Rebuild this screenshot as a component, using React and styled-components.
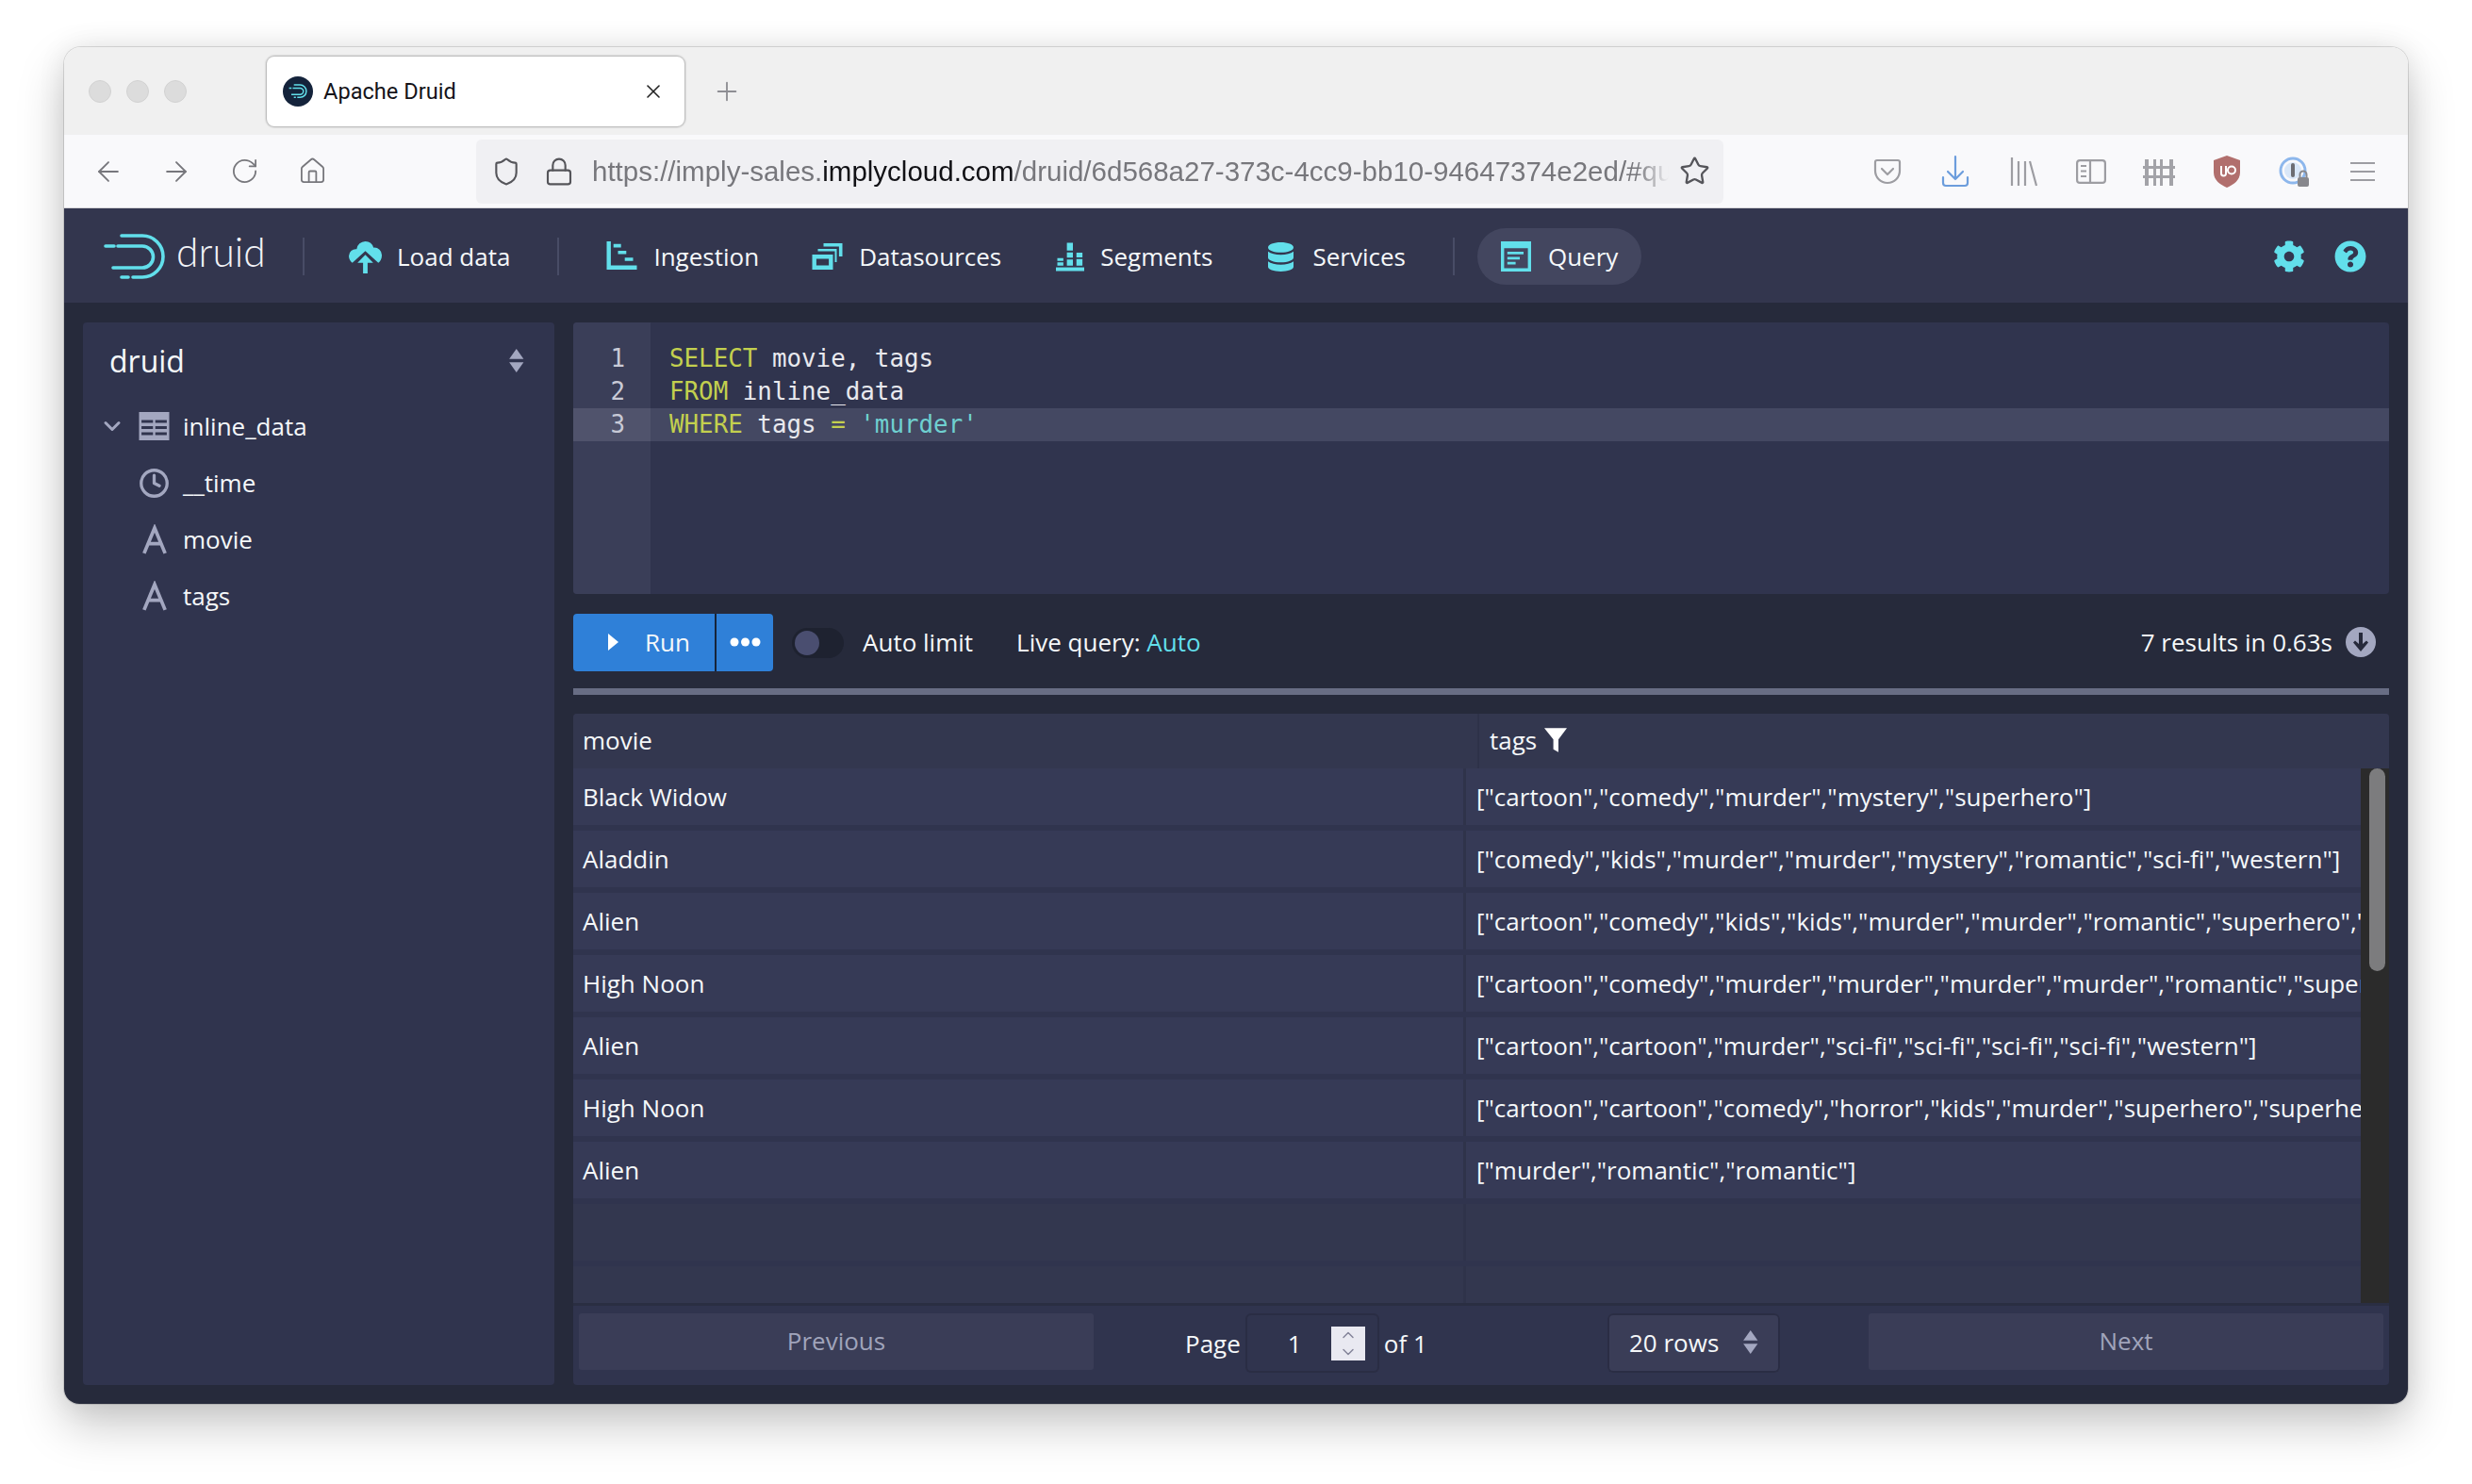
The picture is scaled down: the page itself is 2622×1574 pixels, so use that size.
import React from 'react';
import styled, { createGlobalStyle } from 'styled-components';
import { ArrowLeft, ArrowRight, RotateCw, Home, X, Plus, Shield, Lock, Star, ChevronDown, ChevronUp, Clock } from 'lucide-react';
import { FaCog, FaQuestionCircle } from 'react-icons/fa';

const CYAN = '#62dfeb';
const MUTED = '#a3a7c0';

const Global = createGlobalStyle`
  html, body { margin: 0; padding: 0; background: #fff; }
  * { box-sizing: border-box; }
`;

const Page = styled.div`
  width: 2622px;
  height: 1574px;
  padding: 50px 68px 0;
  background: #fff;
  font-family: "Open Sans", sans-serif;
`;
const Win = styled.div`
  width: 2486px;
  height: 1439px;
  border-radius: 18px 18px 16px 16px;
  overflow: hidden;
  display: flex;
  flex-direction: column;
  box-shadow: 0 0 0 1px rgba(0,0,0,.12), 0 22px 50px rgba(0,0,0,.22), 0 0 30px rgba(0,0,0,.08);
`;

/* ---------- browser chrome ---------- */
const TabStrip = styled.div`
  height: 93px;
  flex: none;
  background: #f0f0f0;
  display: flex;
  align-items: center;
  padding-left: 26px;
`;
const Lights = styled.div`
  display: flex;
  gap: 16px;
  width: 189px;
`;
const Light = styled.span`
  width: 24px;
  height: 24px;
  border-radius: 50%;
  background: #dcdcdc;
  border: 1px solid #d2d2d2;
`;
const Tab = styled.div`
  width: 443px;
  height: 74px;
  background: #fff;
  border-radius: 8px;
  box-shadow: 0 0 2px 1px rgba(0,0,0,.28);
  display: flex;
  align-items: center;
  padding: 0 21px 0 17px;
  gap: 11px;
`;
const TabTitle = styled.span`
  flex: 1;
  font: 400 23.6px "Roboto", "Liberation Sans", sans-serif;
  color: #15141a;
`;
const NewTab = styled.span`
  margin-left: 29px;
  display: flex;
  color: #8e8e93;
`;
const Toolbar = styled.div`
  height: 78px;
  flex: none;
  background: #f9f9fb;
  display: flex;
  align-items: center;
  padding-left: 11px;
  border-bottom: 1px solid #d6d6da;
`;
const ToolBtn = styled.span`
  width: 72px;
  display: flex;
  justify-content: center;
  align-items: center;
  color: ${p => p.$color || '#77777c'};
`;
const UrlBar = styled.div`
  width: 1323px;
  height: 68px;
  margin: 0 138px;
  background: #f0f0f3;
  border-radius: 6px;
  display: flex;
  align-items: center;
  padding: 0 14px 0 16px;
`;
const UrlIcon = styled.span`
  display: flex;
  color: #55555a;
  margin-right: ${p => p.$mr}px;
`;
const UrlText = styled.div`
  flex: 1;
  min-width: 0;
  margin-right: 11px;
  overflow: hidden;
  white-space: nowrap;
  font: 400 29.5px "Liberation Sans", Arial, sans-serif;
  color: #77777c;
  -webkit-mask-image: linear-gradient(to right, #000 97%, transparent 100%);
  mask-image: linear-gradient(to right, #000 97%, transparent 100%);
`;
const Host = styled.span`
  color: #111115;
`;

/* ---------- druid nav ---------- */
const Nav = styled.nav`
  height: 100px;
  flex: none;
  background: #33364e;
  display: flex;
  align-items: center;
  padding: 2px 44px 0 42px;
  color: #f5f8fa;
  font-size: 26px;
`;
const Logo = styled.div`
  display: flex;
  align-items: center;
  gap: 11px;
  width: 211px;
`;
const LogoWord = styled.span`
  font: 300 42.5px "Lato", sans-serif;
  color: #f2f3f7;
  line-height: 1;
  margin-top: -10px;
`;
const Sep = styled.span`
  width: 2px;
  height: 40px;
  background: #484c66;
  margin-left: ${p => p.$ml || 0}px;
`;
const NavItem = styled.a`
  display: flex;
  align-items: center;
  margin-left: ${p => p.$ml}px;
  gap: ${p => p.$gap}px;
`;
const QueryPill = styled.a`
  margin-left: 24px;
  width: 174px;
  height: 60px;
  border-radius: 30px;
  background: #43465f;
  display: flex;
  align-items: center;
  padding-left: 25px;
  gap: 18px;
`;
const NavRight = styled.div`
  margin-left: auto;
  display: flex;
  align-items: center;
  gap: 31px;
  color: ${CYAN};
`;

/* ---------- body ---------- */
const Main = styled.div`
  flex: 1;
  min-height: 0;
  display: flex;
  gap: 20px;
  padding: 21px 20px 20px;
  background: #262a3b;
`;
const Side = styled.aside`
  width: 500px;
  flex: none;
  background: #30344e;
  border-radius: 4px;
  color: #f5f8fa;
  font-size: 26px;
`;
const SideHead = styled.div`
  height: 80px;
  display: flex;
  align-items: center;
  justify-content: space-between;
  padding: 0 32px 0 28px;
  font-size: 32px;
`;
const TreeRow = styled.div`
  height: 60px;
  display: flex;
  align-items: center;
  padding-left: 17px;
`;
const Gutter = styled.span`
  width: 42px;
  display: flex;
  color: ${MUTED};
`;
const TreeIcon = styled.span`
  width: 33px;
  margin-right: 14px;
  display: flex;
  justify-content: center;
  color: ${MUTED};
`;
const Content = styled.div`
  flex: 1;
  min-width: 0;
  display: flex;
  flex-direction: column;
`;
const Editor = styled.div`
  height: 288px;
  flex: none;
  background: #30344e;
  border-radius: 4px;
  overflow: hidden;
  display: flex;
  font: 400 25.85px/35px "DejaVu Sans Mono", monospace;
  color: #e8e9ee;
`;
const LineNos = styled.div`
  width: 82px;
  flex: none;
  background: #3a3e58;
  padding-top: 21px;
`;
const LineNo = styled.div`
  height: 35px;
  text-align: right;
  padding-right: 27px;
  color: #c8cad6;
  background: ${p => (p.$active ? '#50536c' : 'transparent')};
`;
const Code = styled.div`
  flex: 1;
  padding-top: 21px;
`;
const CodeLine = styled.div`
  height: 35px;
  padding-left: 20px;
  white-space: pre;
  background: ${p => (p.$active ? '#444862' : 'transparent')};
`;
const Kw = styled.span`
  color: #c3d04e;
`;
const Str = styled.span`
  color: #6fd0d0;
`;
const Controls = styled.div`
  height: 100px;
  flex: none;
  display: flex;
  align-items: center;
  color: #f5f8fa;
  font-size: 26px;
  padding-top: 2px;
`;
const RunGroup = styled.div`
  display: flex;
  height: 61px;
  border-radius: 4px;
  overflow: hidden;
  background: #16243a;
  gap: 2px;
`;
const RunBtn = styled.div`
  width: 150px;
  background: #2f80d8;
  display: flex;
  align-items: center;
  padding-left: 37px;
  gap: 28px;
`;
const MoreBtn = styled.div`
  width: 60px;
  background: #2f80d8;
  display: flex;
  align-items: center;
  justify-content: center;
`;
const Toggle = styled.div`
  width: 55px;
  height: 32px;
  margin: 2px 0 0 20px;
  border-radius: 16px;
  background: #1e2230;
  padding: 3px;
`;
const Knob = styled.div`
  width: 26px;
  height: 26px;
  border-radius: 50%;
  background: #4a4e70;
`;
const ToggleLabel = styled.span`
  margin-left: 20px;
`;
const LiveLabel = styled.span`
  margin-left: 46px;
`;
const LiveValue = styled.span`
  color: ${CYAN};
`;
const Results = styled.div`
  margin-left: auto;
  display: flex;
  align-items: center;
  gap: 14px;
  padding-right: 14px;
`;
const Splitter = styled.div`
  height: 7px;
  flex: none;
  background: #686d84;
  margin-bottom: 20px;
`;
const TablePanel = styled.section`
  flex: 1;
  min-height: 0;
  background: #30344e;
  border-radius: 4px;
  display: flex;
  flex-direction: column;
  color: #f5f8fa;
  font-size: 26px;
  overflow: hidden;
`;
const HeadRow = styled.div`
  height: 58px;
  flex: none;
  display: flex;
  align-items: center;
  background: #33374f;
`;
const HeadCell = styled.div`
  width: ${p => p.$w}px;
  height: 100%;
  display: flex;
  align-items: center;
  gap: 8px;
  padding-left: ${p => p.$pl}px;
  padding-bottom: 2px;
  border-right: ${p => (p.$line ? '2px solid #2e3249' : 'none')};
`;
const TableBody = styled.div`
  flex: 1;
  min-height: 0;
  display: flex;
  border-bottom: 3px solid #2a2e42;
`;
const Rows = styled.div`
  flex: 1;
  min-width: 0;
  overflow: hidden;
`;
const Row = styled.div`
  height: 60px;
  margin-bottom: 6px;
  display: flex;
  background: ${p => (p.$empty ? '#33374f' : '#363a56')};
`;
const NameCell = styled.div`
  width: 947px;
  flex: none;
  padding-left: 10px;
  line-height: 60px;
  border-right: 3px solid #2f334a;
`;
const TagCell = styled.div`
  flex: 1;
  min-width: 0;
  padding-left: 11px;
  line-height: 60px;
  white-space: nowrap;
  overflow: hidden;
`;
const ScrollTrack = styled.div`
  width: 30px;
  flex: none;
  background: #2b2b2b;
  padding-left: 9px;
`;
const ScrollThumb = styled.div`
  width: 17px;
  height: 215px;
  border-radius: 9px;
  background: #7c7c7e;
`;
const Pager = styled.div`
  height: 84px;
  flex: none;
  display: flex;
  padding: 8px 6px 0 6px;
`;
const PagerBtn = styled.div`
  width: 546px;
  height: 60px;
  flex: none;
  background: #3a3d57;
  border-radius: 3px;
  color: #a0a4bb;
  display: flex;
  align-items: center;
  justify-content: center;
  padding-bottom: 2px;
`;
const PagerMid = styled.div`
  flex: 1;
  display: flex;
  align-items: center;
  height: 63px;
  padding: 0 94px 0 97px;
`;
const NumberBox = styled.div`
  width: 142px;
  height: 63px;
  margin: 0 5px;
  background: #30344e;
  border-radius: 6px;
  box-shadow: inset 0 0 0 2px #2a2d44;
  display: flex;
  align-items: center;
  padding-left: 45px;
`;
const NumberVal = styled.span`
  width: 46px;
`;
const Stepper = styled.span`
  width: 36px;
  height: 36px;
  background: #e9e9f1;
  display: flex;
  flex-direction: column;
  align-items: center;
  justify-content: center;
  color: #85859a;
  line-height: 0;
  svg { margin: -1px 0; }
`;
const SelectBox = styled.div`
  width: 183px;
  height: 63px;
  margin-left: auto;
  background: #3a3d57;
  border-radius: 6px;
  box-shadow: inset 0 0 0 2px #2a2d44;
  display: flex;
  align-items: center;
  justify-content: space-between;
  padding: 0 23px 2px 23px;
`;

/* ---------- drawings ---------- */
const bp = { viewBox: '0 0 16 16', fill: CYAN };
const LogoMark = ({ w = 66, color = CYAN }) => (
  <svg width={w} viewBox="0 0 66 48" fill="none" stroke={color} strokeWidth="3.6" strokeLinecap="round">
    <path d="M19 2H41A22 22 0 0 1 41 46H31" />
    <path d="M19 46H26" />
    <path d="M2 13H11" />
    <path d="M15 13H41A11.5 11.5 0 0 1 41 36H10" />
  </svg>
);
const CloudUp = () => (
  <svg width="35" height="35" {...bp}>
    <path d="M8 .4a4.300 4.300 0 0 1 4 3.100 3.700 3.700 0 0 1 4 3.800c0 1.700-.8 2.800-1.700 3.600L8 5.100 1.700 10.900C.8 10.100 0 9 0 7.500a3.400 3.400 0 0 1 3.800-3.300A4.300 4.300 0 0 1 8 .4z" />
    <path d="M8 7l3.800 3.900H9.100V16H6.900v-5.100H4.200z" />
  </svg>
);
const Gantt = () => (
  <svg width="35" height="32" {...bp}>
    <path d="M0 0h2.200v12.800H16V15H0z" />
    <path d="M3.600 1.400h4v1.800h-4zM6 5h4.400v1.800H6zM9.600 8.600H14v1.800H9.600z" />
  </svg>
);
const Multi = () => (
  <svg width="35" height="32" {...bp}>
    <path fillRule="evenodd" d="M0 7h11v8H0zM2.200 9.200v3.600h6.600V9.200z" />
    <path d="M3 4h10v7h-1V5.200H3z" />
    <path d="M6 1h10v7h-1.800V2.800H6z" />
  </svg>
);
const Stacked = () => (
  <svg width="30" height="33" {...bp}>
    <path d="M0 13.900h16V16H0z" />
    <path d="M.8 8.600h3.400v1.600H.8zM.8 11h3.400v1.900H.8z" />
    <path d="M6.200 0h3.400v4.400H6.200zM6.200 5.400h3.400v3H6.200zM6.200 9.400h3.400v3.500H6.200z" />
    <path d="M11.600 5.600H15v2.600h-3.400zM11.600 9.200H15v3.700h-3.400z" />
  </svg>
);
const Db = () => (
  <svg width="27" height="33" viewBox="1 0 14 16" fill={CYAN}>
    <path d="M8 0C4.100 0 1 1.200 1 2.800s3.100 2.800 7 2.800 7-1.200 7-2.800S11.900 0 8 0z" />
    <path d="M1 5v3.400c0 1.500 3.100 2.600 7 2.600s7-1.100 7-2.600V5c-1.500 1.200-4 1.800-7 1.800S2.500 6.200 1 5z" />
    <path d="M1 10.500v3c0 1.500 3.100 2.500 7 2.500s7-1 7-2.500v-3c-1.500 1.200-4 1.800-7 1.800s-5.500-.6-7-1.800z" />
  </svg>
);
const AppIcon = () => (
  <svg width="32" height="32" {...bp}>
    <path fillRule="evenodd" d="M0 0h16v16H0zM1.700 3.600v10.700h12.600V3.600z" />
    <path d="M3.400 5.500h8.600v1.400H3.400zM3.400 8.200h6.600v1.400H3.400zM3.400 10.900h4.400v1.400H3.400z" />
  </svg>
);
const TableIcon = () => (
  <svg width="33" height="30" viewBox="0 0 16 15" fill={MUTED}>
    <path fillRule="evenodd" d="M0 0h16v15H0zM1.300 4.200v1.500h6.100V4.200zm7.300 0v1.500h6.100V4.200zM1.300 7.500V9h6.100V7.500zm7.300 0V9h6.100V7.500zM1.300 10.800v1.500h6.100v-1.500zm7.300 0v1.500h6.100v-1.500z" />
  </svg>
);
const FontIcon = () => (
  <svg width="26" height="32" viewBox="0 0 14 16" fill="none" stroke={MUTED} strokeWidth="2">
    <path d="M1 16L7 1.500 13 16M3.200 10.500h7.600" />
  </svg>
);
const DoubleCaret = ({ h = 26 }) => (
  <svg width={h * 0.7} height={h} viewBox="0 0 12 18" fill={MUTED}>
    <path d="M6 0l5.500 7.800H.5zM6 18L.5 10.200h11z" />
  </svg>
);
const Play = () => (
  <svg width="11" height="18" viewBox="0 0 11 18" fill="#fff"><path d="M0 0l11 9-11 9z" /></svg>
);
const Dots = () => (
  <svg width="33" height="10" viewBox="0 0 33 10" fill="#fff">
    <circle cx="5" cy="5" r="4.500" /><circle cx="16.500" cy="5" r="4.500" /><circle cx="28" cy="5" r="4.500" />
  </svg>
);
const DownCircle = () => (
  <svg width="32" height="32" viewBox="0 0 16 16">
    <circle cx="8" cy="8" r="8" fill={MUTED} />
    <path d="M7 3h2v6l2-1.800 1 1.100L8 13 4 8.300l1-1.100L7 9z" fill="#262a3b" />
  </svg>
);
const Funnel = () => (
  <svg width="24" height="26" viewBox="0 0 16 17" fill="#fff"><path d="M0 0h16L10 8v9l-3.600-2V8z" /></svg>
);

const Pocket = () => (
  <svg width="30" height="30" viewBox="0 0 30 30" fill="none" stroke="#9d9da2" strokeWidth="2.200" strokeLinejoin="round">
    <path d="M4 3h22a2 2 0 0 1 2 2v9a13 13 0 0 1-26 0V5a2 2 0 0 1 2-2z" />
    <path d="M9 12l6 6 6-6" strokeLinecap="round" />
  </svg>
);
const DownloadTray = () => (
  <svg width="30" height="36" viewBox="0 0 30 36" fill="none" stroke="#6c9ddc" strokeWidth="2.200" strokeLinecap="round" strokeLinejoin="round">
    <path d="M15 2v24M7 18l8 8 8-8" />
    <path d="M2 24v6a3 3 0 0 0 3 3h20a3 3 0 0 0 3-3v-6" />
  </svg>
);
const Library = () => (
  <svg width="30" height="32" viewBox="0 0 30 32" stroke="#9d9da2" strokeWidth="2.200" fill="none">
    <path d="M3 1v30M10 5v26M17 5v26M22 5l7 26" />
  </svg>
);
const SidebarI = () => (
  <svg width="32" height="26" viewBox="0 0 32 26" stroke="#9d9da2" strokeWidth="2.200" fill="none">
    <rect x="1.100" y="1.100" width="29.800" height="23.800" rx="3" />
    <path d="M15 1v24M5 7h6M5 12.500h6M5 18h6" />
  </svg>
);
const Fence = () => (
  <svg width="34" height="30" viewBox="0 0 34 30" fill="#a3a3a8">
    <path d="M2 2h4v28H2zM11 2h3v28h-3zM18 2h3v28h-3zM28 2h4v28h-4z" />
    <path d="M0 9h34v3H0zM0 19h34v3H0z" />
  </svg>
);
const UBlock = () => (
  <svg width="30" height="34" viewBox="0 0 30 34">
    <path d="M15 0l14 5v13c0 8-7 13-14 16C8 31 1 26 1 18V5z" fill="#b16f6d" />
    <path d="M9 11v8a2.500 2.500 0 0 0 5 0v-8" fill="none" stroke="#fff" strokeWidth="2" />
    <circle cx="20" cy="15.500" r="4" fill="none" stroke="#fff" strokeWidth="2" />
  </svg>
);
const OnePass = () => (
  <svg width="34" height="36" viewBox="0 0 34 36" fill="none">
    <circle cx="15" cy="17" r="13" stroke="#8db7ec" strokeWidth="3" />
    <circle cx="15" cy="17" r="9" fill="#d9e7f8" />
    <rect x="13" y="9" width="4" height="15" rx="2" fill="#6d6d72" />
    <rect x="20" y="24" width="12" height="10" rx="2" fill="#88888d" />
    <path d="M22.500 24v-3a3.500 3.500 0 0 1 7 0v3" stroke="#88888d" strokeWidth="2" />
  </svg>
);
const Burger = () => (
  <svg width="28" height="24" viewBox="0 0 28 24" stroke="#9d9da2" strokeWidth="2.200">
    <path d="M1 3h26M1 12h26M1 21h26" />
  </svg>
);

const movies = [
  ['Black Widow', '["cartoon","comedy","murder","mystery","superhero"]'],
  ['Aladdin', '["comedy","kids","murder","murder","mystery","romantic","sci-fi","western"]'],
  ['Alien', '["cartoon","comedy","kids","kids","murder","murder","romantic","superhero","western"]'],
  ['High Noon', '["cartoon","comedy","murder","murder","murder","murder","romantic","superhero","western"]'],
  ['Alien', '["cartoon","cartoon","murder","sci-fi","sci-fi","sci-fi","sci-fi","western"]'],
  ['High Noon', '["cartoon","cartoon","comedy","horror","kids","murder","superhero","superhero","western"]'],
  ['Alien', '["murder","romantic","romantic"]'],
  ['', ''],
  ['', ''],
];

export default function App() {
  return (
    <Page>
      <Global />
      <Win>
        <TabStrip>
          <Lights><Light /><Light /><Light /></Lights>
          <Tab>
            <svg width="32" height="32" viewBox="0 0 32 32">
              <circle cx="16" cy="16" r="16" fill="#14233b" />
              <g transform="translate(6 8.500) scale(.3)"><g fill="none" stroke={CYAN} strokeWidth="5"><path d="M19 2H41A22 22 0 0 1 41 46H31M19 46H26M2 13H11M15 13H41A11.500 11.500 0 0 1 41 36H10" /></g></g>
            </svg>
            <TabTitle>Apache Druid</TabTitle>
            <X size={24} strokeWidth={1.6} color="#222" />
          </Tab>
          <NewTab><Plus size={32} strokeWidth={1.4} /></NewTab>
        </TabStrip>
        <Toolbar>
          <ToolBtn><ArrowLeft size={34} strokeWidth={1.3} /></ToolBtn>
          <ToolBtn><ArrowRight size={34} strokeWidth={1.3} /></ToolBtn>
          <ToolBtn><RotateCw size={31} strokeWidth={1.4} /></ToolBtn>
          <ToolBtn><Home size={31} strokeWidth={1.4} /></ToolBtn>
          <UrlBar>
            <UrlIcon $mr={24}><Shield size={32} strokeWidth={1.6} /></UrlIcon>
            <UrlIcon $mr={19}><Lock size={32} strokeWidth={1.6} /></UrlIcon>
            <UrlText>https://imply-sales.<Host>implycloud.com</Host>/druid/6d568a27-373c-4cc9-bb10-94647374e2ed/#query</UrlText>
            <UrlIcon $mr={0}><Star size={33} strokeWidth={1.7} /></UrlIcon>
          </UrlBar>
          <ToolBtn><Pocket /></ToolBtn>
          <ToolBtn><DownloadTray /></ToolBtn>
          <ToolBtn><Library /></ToolBtn>
          <ToolBtn><SidebarI /></ToolBtn>
          <ToolBtn><Fence /></ToolBtn>
          <ToolBtn><UBlock /></ToolBtn>
          <ToolBtn><OnePass /></ToolBtn>
          <ToolBtn><Burger /></ToolBtn>
        </Toolbar>
        <Nav>
          <Logo><LogoMark /><LogoWord>druid</LogoWord></Logo>
          <Sep />
          <NavItem $ml={47} $gap={16}><CloudUp />Load data</NavItem>
          <Sep $ml={50} />
          <NavItem $ml={49} $gap={16}><Gantt />Ingestion</NavItem>
          <NavItem $ml={55} $gap={16}><Multi />Datasources</NavItem>
          <NavItem $ml={58} $gap={17}><Stacked />Segments</NavItem>
          <NavItem $ml={59} $gap={20}><Db />Services</NavItem>
          <Sep $ml={50} />
          <QueryPill><AppIcon />Query</QueryPill>
          <NavRight>
            <FaCog size={34} />
            <FaQuestionCircle size={34} />
          </NavRight>
        </Nav>
        <Main>
          <Side>
            <SideHead>druid<DoubleCaret h={25} /></SideHead>
            <TreeRow>
              <Gutter><ChevronDown size={28} strokeWidth={2.6} /></Gutter>
              <TreeIcon><TableIcon /></TreeIcon>inline_data
            </TreeRow>
            <TreeRow><Gutter /><TreeIcon><Clock size={33} strokeWidth={2.4} /></TreeIcon>__time</TreeRow>
            <TreeRow><Gutter /><TreeIcon><FontIcon /></TreeIcon>movie</TreeRow>
            <TreeRow><Gutter /><TreeIcon><FontIcon /></TreeIcon>tags</TreeRow>
          </Side>
          <Content>
            <Editor>
              <LineNos>
                <LineNo>1</LineNo>
                <LineNo>2</LineNo>
                <LineNo $active>3</LineNo>
              </LineNos>
              <Code>
                <CodeLine><Kw>SELECT</Kw> movie, tags</CodeLine>
                <CodeLine><Kw>FROM</Kw> inline_data</CodeLine>
                <CodeLine $active><Kw>WHERE</Kw> tags <Kw>=</Kw> <Str>'murder'</Str></CodeLine>
              </Code>
            </Editor>
            <Controls>
              <RunGroup>
                <RunBtn><Play />Run</RunBtn>
                <MoreBtn><Dots /></MoreBtn>
              </RunGroup>
              <Toggle><Knob /></Toggle>
              <ToggleLabel>Auto limit</ToggleLabel>
              <LiveLabel>Live query: <LiveValue>Auto</LiveValue></LiveLabel>
              <Results>7 results in 0.63s <DownCircle /></Results>
            </Controls>
            <Splitter />
            <TablePanel>
              <HeadRow>
                <HeadCell $w={961} $pl={10} $line>movie</HeadCell>
                <HeadCell $pl={11}>tags <Funnel /></HeadCell>
              </HeadRow>
              <TableBody>
                <Rows>
                  {movies.map(([name, tags], i) => (
                    <Row key={i} $empty={!name}>
                      <NameCell>{name}</NameCell>
                      <TagCell>{tags}</TagCell>
                    </Row>
                  ))}
                </Rows>
                <ScrollTrack><ScrollThumb /></ScrollTrack>
              </TableBody>
              <Pager>
                <PagerBtn>Previous</PagerBtn>
                <PagerMid>
                  Page
                  <NumberBox>
                    <NumberVal>1</NumberVal>
                    <Stepper><ChevronUp size={20} strokeWidth={1.8} /><ChevronDown size={20} strokeWidth={1.8} /></Stepper>
                  </NumberBox>
                  of 1
                  <SelectBox>20 rows<DoubleCaret h={25} /></SelectBox>
                </PagerMid>
                <PagerBtn>Next</PagerBtn>
              </Pager>
            </TablePanel>
          </Content>
        </Main>
      </Win>
    </Page>
  );
}
